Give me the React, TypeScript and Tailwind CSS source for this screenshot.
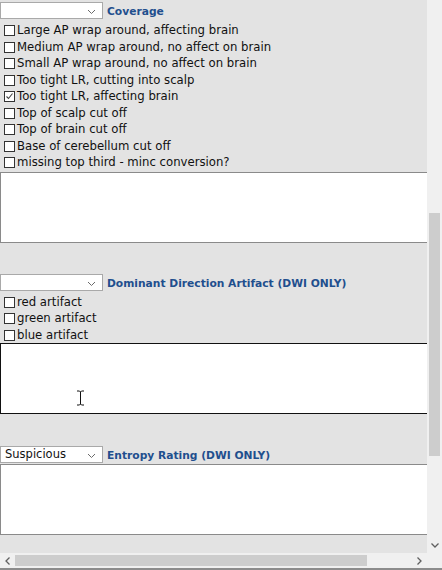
import React from "react";

const FONT = { fontFamily: '"DejaVu Sans", Verdana, sans-serif' };

function Chevron({ className = "" }: { className?: string }) {
  return (
    <svg width="9" height="6" viewBox="0 0 9 6" className={className}>
      <path d="M1 1 L4.5 4.5 L8 1" fill="none" stroke="#6b6b6b" strokeWidth="1" />
    </svg>
  );
}

function Select({ value = "" }: { value?: string }) {
  return (
    <div className="relative w-[103px] h-[17px] bg-white border border-[#a9a9a9] flex items-center shrink-0">
      <span className="pl-[4px] pt-[1px] text-[11.5px] leading-none text-[#111]">{value}</span>
      <Chevron className="absolute right-[6px] top-[6px]" />
    </div>
  );
}

function Header({ label, value }: { label: string; value?: string }) {
  return (
    <div className="flex items-center h-[17px]">
      <Select value={value} />
      <span className="ml-[4px] mt-[3px] text-[10.7px] font-bold text-[#1f4f8e] leading-none whitespace-nowrap">{label}</span>
    </div>
  );
}

function Check({ label, checked = false }: { label: string; checked?: boolean }) {
  return (
    <div className="flex items-center h-[16.5px] whitespace-nowrap">
      <div className="ml-[4px] mt-[1px] w-[11px] h-[11px] border border-[#333] bg-white relative shrink-0">
        {checked && (
          <svg width="9" height="9" viewBox="0 0 9 9" className="absolute left-0 top-0">
            <path d="M1.5 4.5 L3.5 6.5 L7.5 1.5" fill="none" stroke="#444" strokeWidth="1.1" />
          </svg>
        )}
      </div>
      <span className="ml-[2px] pt-[2px] text-[11.7px] leading-none text-[#111]">{label}</span>
    </div>
  );
}

function Area({ dark = false }: { dark?: boolean }) {
  return (
    <div
      className={`w-[560px] h-[71px] bg-white border ${dark ? "border-[#111]" : "border-[#8a8a8a]"}`}
    />
  );
}

export default function App() {
  return (
    <div className="w-[442px] h-[570px] flex flex-col bg-[#e3e3e3] overflow-hidden" style={FONT}>
      <div className="flex flex-1 min-h-0">
        <div className="w-[427px] overflow-hidden relative">
          <div className="pt-[2px]">
            <Header label="Coverage" />
            <div className="mt-[3px]">
              <Check label="Large AP wrap around, affecting brain" />
              <Check label="Medium AP wrap around, no affect on brain" />
              <Check label="Small AP wrap around, no affect on brain" />
              <Check label="Too tight LR, cutting into scalp" />
              <Check label="Too tight LR, affecting brain" checked />
              <Check label="Top of scalp cut off" />
              <Check label="Top of brain cut off" />
              <Check label="Base of cerebellum cut off" />
              <Check label="missing top third - minc conversion?" />
            </div>
            <div className="mt-[1.5px]">
              <Area />
            </div>
            <div className="mt-[31px]">
              <Header label="Dominant Direction Artifact (DWI ONLY)" />
            </div>
            <div className="mt-[2.5px]">
              <Check label="red artifact" />
              <Check label="green artifact" />
              <Check label="blue artifact" />
            </div>
            <div>
              <Area dark />
            </div>
            <div className="mt-[32px]">
              <Header label="Entropy Rating (DWI ONLY)" value="Suspicious" />
            </div>
            <div className="mt-[1px]">
              <Area />
            </div>
          </div>
          <svg width="9" height="16" viewBox="0 0 9 16" className="absolute left-[76px] top-[390px]">
            <path d="M1 1 H3.5 L4.5 2 L5.5 1 H8 M4.5 2 V14 M1 15 H3.5 L4.5 14 L5.5 15 H8" fill="none" stroke="#fff" strokeWidth="2.5" />
            <path d="M1 1 H3.5 L4.5 2 L5.5 1 H8 M4.5 2 V14 M1 15 H3.5 L4.5 14 L5.5 15 H8" fill="none" stroke="#111" strokeWidth="1" />
          </svg>
        </div>
        <div className="w-[15px] bg-[#f0f0f0] flex flex-col">
          <div className="h-[213px]" />
          <div className="h-[243px] mx-[2px] bg-[#cdcdcd]" />
          <div className="flex-1" />
          <div className="h-[15px] flex items-center justify-center">
            <svg width="8" height="5" viewBox="0 0 8 5">
              <path d="M0.5 0.5 L4 4 L7.5 0.5" fill="none" stroke="#606060" strokeWidth="1.3" />
            </svg>
          </div>
        </div>
      </div>
      <div className="h-[15px] flex bg-[#f0f0f0] shrink-0">
        <div className="w-[15px] flex items-center justify-center">
          <svg width="5" height="8" viewBox="0 0 5 8">
            <path d="M4.5 0.5 L1 4 L4.5 7.5" fill="none" stroke="#606060" strokeWidth="1.3" />
          </svg>
        </div>
        <div className="w-[352px] my-[2px] bg-[#cdcdcd]" />
        <div className="flex-1" />
        <div className="w-[15px] flex items-center justify-center">
          <svg width="5" height="8" viewBox="0 0 5 8">
            <path d="M0.5 0.5 L4 4 L0.5 7.5" fill="none" stroke="#606060" strokeWidth="1.3" />
          </svg>
        </div>
        <div className="w-[15px]" />
      </div>
      <div className="h-[2px] bg-[#8c8c8c] shrink-0" />
    </div>
  );
}
